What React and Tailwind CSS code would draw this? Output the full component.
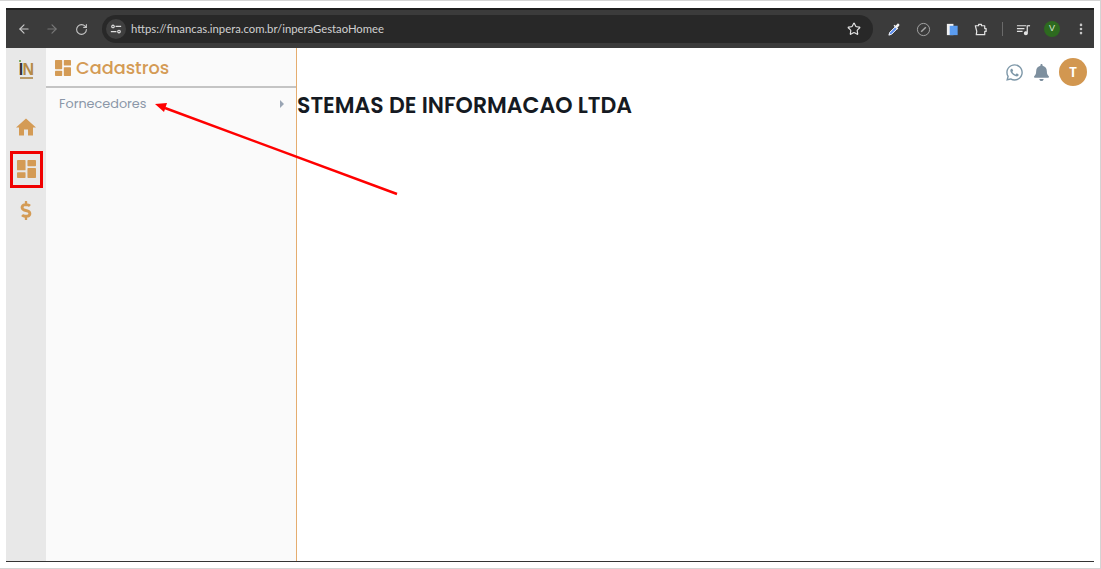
import React from "react";
import { ArrowLeft, ArrowRight, RotateCw, Star, MoreVertical } from "lucide-react";
import { FaDollarSign, FaWhatsapp, FaBell } from "react-icons/fa";

const Panels = ({ className }) => (
  <svg viewBox="0 0 20 20" className={className} fill="currentColor" preserveAspectRatio="none">
    <rect x="0" y="0" width="9" height="11.500" rx="0.8" />
    <rect x="11" y="0" width="9" height="7" rx="0.8" />
    <rect x="0" y="13.500" width="9" height="6.500" rx="0.8" />
    <rect x="11" y="9" width="9" height="11" rx="0.8" />
  </svg>
);

export default function App() {
  return (
    <div className="relative w-[1101px] h-[569px] bg-white overflow-hidden border-t border-r border-b border-[#d4d4d4] pt-[7px] pl-1.5 pr-1 font-['Poppins','Inter','Liberation_Sans',sans-serif]">
      <div className="flex flex-col h-[554px] w-[1088px] border-b border-[#333333]">
        {/* browser toolbar */}
        <div className="h-10 shrink-0 bg-[#3b3b3b] border-t-2 border-[#1f1f1f] flex items-center text-[#c7c7c7]">
          <ArrowLeft className="w-[14px] h-[14px] ml-[11px]" strokeWidth={2} />
          <ArrowRight className="w-[14px] h-[14px] ml-[14px] text-[#777777]" strokeWidth={2} />
          <RotateCw className="w-[13px] h-[13px] ml-[16px]" strokeWidth={2} />
          <div className="ml-[14px] w-[771px] h-[28px] rounded-full bg-[#282828] flex items-center">
            <div className="ml-[4px] w-[20px] h-[20px] rounded-full bg-[#3f3f3f] flex items-center justify-center">
              <svg viewBox="0 0 14 14" className="w-[12px] h-[12px]" fill="none" stroke="#e0e0e0" strokeWidth="1.3">
                <circle cx="3.500" cy="4" r="1.500" />
                <path d="M6.500 4H13M1 10h6.500" />
                <circle cx="10.500" cy="10" r="1.500" />
              </svg>
            </div>
            <span className="ml-[5px] text-[11.300px] text-[#d0d0d0] font-['Lato',sans-serif]">https://financas.inpera.com.br/inperaGestaoHomee</span>
            <Star className="w-[14px] h-[14px] ml-auto mr-[12px] text-[#e3e3e3]" strokeWidth={2} />
          </div>
          <svg viewBox="0 0 16 16" className="w-[15px] h-[15px] ml-[14px]">
            <path d="M2 14l1-3 6-6 2 2-6 6z" fill="#5b8def" stroke="#fff" strokeWidth="1" />
            <path d="M9 4l2-2c1-1 3 1 2 2l-2 2 1 1-1 1-4-4 1-1z" fill="#f2f2f2" />
          </svg>
          <svg viewBox="0 0 16 16" className="w-[15px] h-[15px] ml-[14px]" fill="none" stroke="#a8a8a8" strokeWidth="1">
            <circle cx="8" cy="8" r="6.500" />
            <path d="M5.500 10.500L10.500 5.500" strokeWidth="1.600" />
          </svg>
          <svg viewBox="0 0 16 16" className="w-[15px] h-[15px] ml-[14px]">
            <rect x="2" y="2" width="7" height="12" fill="#f1f1f1" />
            <path d="M5 4h8.500v10H5z" fill="#5b9cf0" />
          </svg>
          <svg viewBox="0 0 16 16" className="w-[15px] h-[15px] ml-[13px]" fill="none" stroke="#e3e3e3" strokeWidth="1.300">
            <path d="M2.500 4H6V2.500h3V4h3.500v3H14v3h-1.500v3.500h-9L4 10 2.500 4z" strokeLinejoin="round" />
          </svg>
          <div className="w-px h-3.5 bg-[#6a6a6a] ml-[14px]" />
          <svg viewBox="0 0 16 16" className="w-[15px] h-[15px] ml-[13px]" fill="none" stroke="#e3e3e3" strokeWidth="1.300">
            <path d="M1 4h10M1 7h8M1 10h6" />
            <path d="M12 4v7.500" />
            <circle cx="10.500" cy="12" r="1.500" fill="#e3e3e3" />
            <path d="M12 4h3" />
          </svg>
          <div className="ml-[13px] w-4 h-4 rounded-full bg-[#2d6a1f] flex items-center justify-center text-[9px] text-[#d8e8d0] font-['Liberation_Sans',sans-serif]">V</div>
          <MoreVertical className="w-[14px] h-[14px] ml-[14px]" strokeWidth={2.500} />
        </div>

        {/* app */}
        <div className="flex flex-1 min-h-0">
          <div className="w-10 shrink-0 bg-[#e8e8e8] flex flex-col items-center text-[#d49b55]">
            <div className="mt-[14px] h-[17px] w-[14px] flex flex-col items-center relative">
              <span className="text-[16px] leading-[15px] font-bold tracking-[-0.04em] text-[#333333] font-['Liberation_Sans',sans-serif]">
                I<span className="text-[#b58a45]">N</span>
              </span>
              <span className="w-[13px] h-[2px] bg-[#b99a68]" />
              <span className="absolute top-[-2px] left-[0px] w-[2px] h-[2px] rounded-full bg-[#5a9a3a]" />
            </div>
            <svg viewBox="2 3 20 17" className="w-[20px] h-[18px] mt-[39px]" fill="currentColor">
              <path d="M10 20v-6h4v6h5v-8h3L12 3 2 12h3v8z" />
            </svg>
            <Panels className="w-[19px] h-[18px] mt-[24px]" />
            <FaDollarSign className="w-[12px] h-[19px] mt-[23px]" />
          </div>

          <div className="w-[251px] shrink-0 bg-[#fafafa] border-r border-[#e5ad6f] flex flex-col">
            <div className="h-10 shrink-0 border-b-2 border-[#c4c4c4] flex items-center pl-[9px] text-[#d49b55]">
              <Panels className="w-4 h-4 mt-[1px]" />
              <span className="ml-[5px] mt-[2px] text-[17.700px] font-medium leading-none">Cadastros</span>
            </div>
            <div className="h-[31px] flex items-center pl-[13px] pr-[12px] text-[#8b97a8] text-[12.800px]">
              <span>Fornecedores</span>
              <span className="ml-auto w-0 h-0 border-y-[4px] border-y-transparent border-l-[4px] border-l-[#9aa5b4]" />
            </div>
          </div>

          <div className="flex-1 bg-white relative">
            <h1 className="mt-[44px] text-[22px] leading-7 font-semibold text-[#151a22] whitespace-nowrap">STEMAS DE INFORMACAO LTDA</h1>
            <div className="absolute top-[10px] right-[7px] flex items-center">
              <FaWhatsapp className="w-[19px] h-[19px] text-[#7d97a8]" />
              <FaBell className="ml-[10px] w-[15px] h-[17px] text-[#7d8f9e]" />
              <div className="ml-[10px] w-7 h-7 rounded-full bg-[#d29750] text-white flex items-center justify-center text-[14px] font-semibold">T</div>
            </div>
          </div>
        </div>
      </div>

      {/* annotations */}
      <div className="absolute left-[10px] top-[150px] w-[33px] h-[37px] border-[3px] border-[#f00000]" />
      <svg className="absolute left-0 top-[-1px] pointer-events-none" width="1101" height="569" fill="none">
        <path d="M397 194L165 108" stroke="#ff0000" strokeWidth="2.400" />
        <path d="M155 104l12-1-3 9z" fill="#ff0000" />
      </svg>
    </div>
  );
}
